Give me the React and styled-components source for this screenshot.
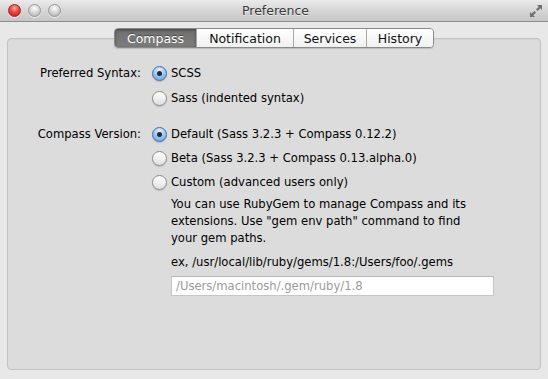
import styled, { createGlobalStyle } from "styled-components";

const Global = createGlobalStyle`
  html, body {
    margin: 0;
    padding: 0;
    background: #e8e8e8;
  }
  * { box-sizing: border-box; }
`;

const Window = styled.div`
  width: 548px;
  height: 379px;
  display: flex;
  flex-direction: column;
  background: #e8e8e8;
  font-family: "DejaVu Sans", "Lucida Grande", sans-serif;
  font-size: 11.6px;
  color: #000;
`;

const TitleBar = styled.div`
  height: 22px;
  flex: none;
  display: grid;
  grid-template-columns: 1fr auto 1fr;
  align-items: center;
  padding: 0 5px 0 8px;
  background: linear-gradient(#ebebeb, #d6d6d6 50%, #c6c6c6);
  border-bottom: 1px solid #8e8e8e;
`;

const Lights = styled.div`
  display: flex;
  gap: 7px;
`;

const Light = styled.span`
  width: 13px;
  height: 13px;
  border-radius: 50%;
  border: 1px solid ${(p) => (p.red ? "#9b2a26" : "#999")};
  background: ${(p) =>
    p.red
      ? "radial-gradient(circle at 50% 30%, #ffb0a8 0%, #f0423a 45%, #b81d16 100%)"
      : "radial-gradient(circle at 50% 30%, #ffffff 0%, #d8d8d8 45%, #a8a8a8 100%)"};
  box-shadow: 0 1px 0 rgba(255, 255, 255, 0.6);
`;

const Title = styled.div`
  font-size: 12.5px;
  color: #3a3a3a;
  text-shadow: 0 1px 0 rgba(255, 255, 255, 0.6);
`;

const Corner = styled.div`
  justify-self: end;
  display: flex;
`;

const ResizeIcon = () => (
  <svg width="14" height="14" viewBox="0 0 14 14">
    <g fill="#6f6f6f">
      <polygon points="8,1 13,1 13,6 11.3,4.3 8.6,7 7,5.4 9.7,2.7" />
      <polygon points="1,8 1,13 6,13 4.3,11.3 7,8.6 5.4,7 2.7,9.7" />
    </g>
  </svg>
);

const Content = styled.div`
  flex: 1;
  display: flex;
  flex-direction: column;
  padding: 6px 7px 9px;
`;

const TabBar = styled.div`
  position: relative;
  z-index: 1;
  align-self: center;
  display: flex;
  height: 20px;
  border: 1px solid #8a8a8a;
  border-radius: 4px;
  overflow: hidden;
  box-shadow: 0 1px 1px rgba(0, 0, 0, 0.15);
`;

const Tab = styled.div`
  display: flex;
  align-items: center;
  justify-content: center;
  width: ${(p) => p.w}px;
  font-size: 12.5px;
  color: ${(p) => (p.active ? "#fff" : "#111")};
  background: ${(p) =>
    p.active
      ? "linear-gradient(#6f6f6f, #7d7d7d)"
      : "linear-gradient(#ffffff, #f1f1f1)"};
  box-shadow: ${(p) =>
    p.active ? "inset 0 1px 3px rgba(0,0,0,0.45)" : "none"};
  text-shadow: ${(p) => (p.active ? "0 -1px 0 rgba(0,0,0,0.4)" : "none")};
  & + & {
    border-left: 1px solid #a9a9a9;
  }
`;

const Group = styled.div`
  flex: 1;
  margin-top: -10px;
  background: #dcdcdc;
  border: 1px solid #c2c2c2;
  border-radius: 4px;
  box-shadow: inset 0 1px 1px rgba(0, 0, 0, 0.04);
  padding: 25px 0 0;
  display: grid;
  grid-template-columns: 133px 1fr;
  column-gap: 11px;
  align-content: start;
`;

const Label = styled.div`
  text-align: right;
  height: 18px;
  line-height: 18px;
  margin-top: ${(p) => p.mt || 0}px;
`;

const Options = styled.div`
  display: flex;
  flex-direction: column;
  gap: ${(p) => p.gap}px;
  margin-top: ${(p) => p.mt || 0}px;
`;

const Option = styled.label`
  display: flex;
  align-items: center;
  gap: 4px;
  height: 18px;
`;

const Radio = styled.span`
  width: 15px;
  height: 15px;
  flex: none;
  border-radius: 50%;
  display: flex;
  align-items: center;
  justify-content: center;
  border: 1px solid ${(p) => (p.checked ? "#4a6ea3" : "#8c8c8c")};
  background: ${(p) =>
    p.checked
      ? "radial-gradient(circle at 50% 25%, #e3f1ff 0%, #9fcaf3 45%, #5aa0e6 100%)"
      : "linear-gradient(#ffffff, #ededed 60%, #dedede)"};
  box-shadow: 0 1px 1px rgba(0, 0, 0, 0.15);
  &::after {
    content: "";
    display: ${(p) => (p.checked ? "block" : "none")};
    width: 5px;
    height: 5px;
    border-radius: 50%;
    background: #1d2a3a;
  }
`;

const Help = styled.p`
  margin: -1px 0 0 19px;
  width: 310px;
  line-height: 17px;
`;

const Example = styled.div`
  margin: 1px 0 0 19px;
  line-height: 17px;
`;

const PathInput = styled.input`
  margin: -1px 0 0 19px;
  width: 323px;
  height: 20px;
  border: 1px solid #c6c6c6;
  border-top-color: #b5b5b5;
  background: #fff;
  padding: 0 4px;
  font-family: "DejaVu Sans", "Lucida Grande", sans-serif;
  font-size: 11.6px;
  color: #000;
  outline: none;
  &::placeholder {
    color: #9a9a9a;
  }
`;

const RadioOption = ({ checked, children }) => (
  <Option>
    <Radio checked={checked} />
    {children}
  </Option>
);

export default function App() {
  return (
    <Window>
      <Global />
      <TitleBar>
        <Lights>
          <Light red />
          <Light />
          <Light />
        </Lights>
        <Title>Preference</Title>
        <Corner>
          <ResizeIcon />
        </Corner>
      </TitleBar>
      <Content>
        <TabBar>
          <Tab w={81} active>
            Compass
          </Tab>
          <Tab w={97}>Notification</Tab>
          <Tab w={73}>Services</Tab>
          <Tab w={67}>History</Tab>
        </TabBar>
        <Group>
          <Label>Preferred Syntax:</Label>
          <Options gap={7}>
            <RadioOption checked>SCSS</RadioOption>
            <RadioOption>Sass (indented syntax)</RadioOption>
          </Options>
          <Label mt={18}>Compass Version:</Label>
          <Options gap={6} mt={18}>
            <RadioOption checked>Default (Sass 3.2.3 + Compass 0.12.2)</RadioOption>
            <RadioOption>Beta (Sass 3.2.3 + Compass 0.13.alpha.0)</RadioOption>
            <RadioOption>Custom (advanced users only)</RadioOption>
            <Help>
              You can use RubyGem to manage Compass and its extensions. Use
              "gem env path" command to find your gem paths.
            </Help>
            <Example>ex, /usr/local/lib/ruby/gems/1.8:/Users/foo/.gems</Example>
            <PathInput placeholder="/Users/macintosh/.gem/ruby/1.8" />
          </Options>
        </Group>
      </Content>
    </Window>
  );
}
